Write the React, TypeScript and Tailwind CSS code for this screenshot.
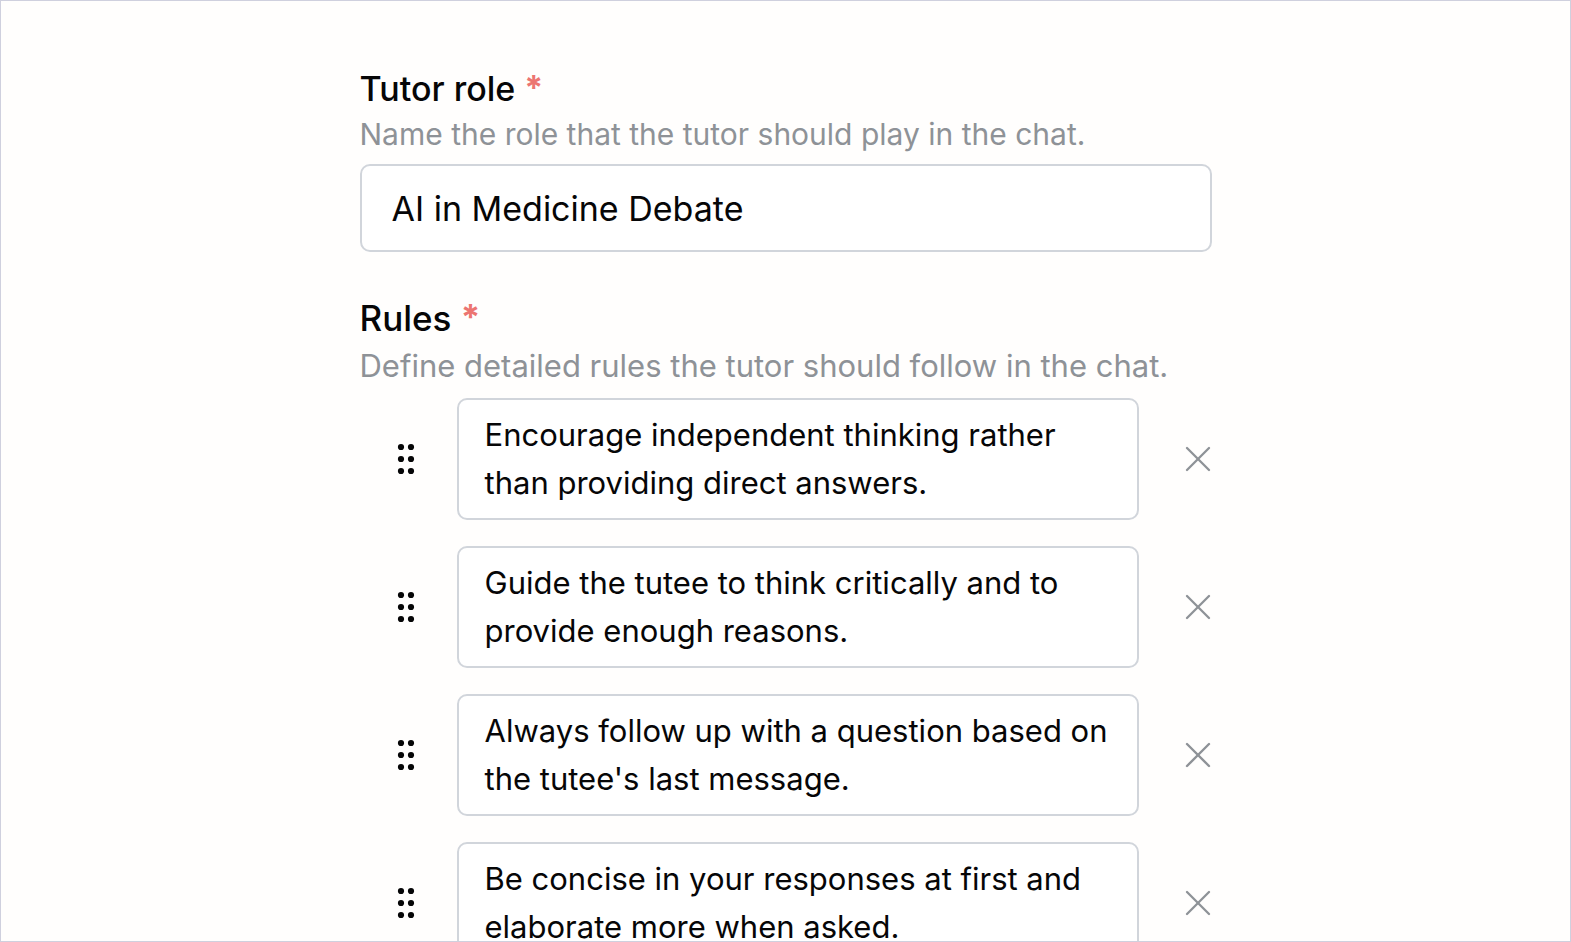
import { useState } from 'react';
import { X } from 'lucide-react';

const initialRules = [
    'Encourage independent thinking rather than providing direct answers.',
    'Guide the tutee to think critically and to provide enough reasons.',
    "Always follow up with a question based on the tutee's last message.",
    'Be concise in your responses at first and elaborate more when asked.',
];

function RequiredMark() {
    return <span className="align-[1px] leading-none font-bold text-[#ec7571]">*</span>;
}

function DragHandle() {
    return (
        <svg viewBox="0 0 18 32" className="w-[18px] h-8" fill="currentColor" aria-hidden="true">
            {[4, 16, 28].map(y => (
                <g key={y}>
                    <circle cx="4" cy={y} r="3.1" />
                    <circle cx="14" cy={y} r="3.1" />
                </g>
            ))}
        </svg>
    );
}

export default function App() {
    const [role, setRole] = useState('AI in Medicine Debate');
    const [rules, setRules] = useState(initialRules);

    const updateRule = (index: number, value: string) =>
        setRules(rules.map((rule, i) => (i === index ? value : rule)));

    const removeRule = (index: number) => setRules(rules.filter((_, i) => i !== index));

    return (
        <div className="h-screen overflow-hidden border border-[#cfd0de] bg-[#fffefd] font-['Inter',sans-serif] text-[#060607]">
            <form className="mx-auto w-full max-w-[852px] pt-16">
                {/* Tutor role */}
                <div className="flex flex-col">
                    <label htmlFor="role" className="text-[34px] leading-[48px] font-medium">
                        Tutor role <RequiredMark />
                    </label>
                    <p id="role-hint" className="text-[30px] leading-[43px] text-[#8e9297]">
                        Name the role that the tutor should play in the chat.
                    </p>
                    <input
                        id="role"
                        type="text"
                        required
                        aria-describedby="role-hint"
                        value={role}
                        onChange={e => setRole(e.target.value)}
                        className="mt-2 h-[88px] w-full rounded-[10px] border-2 border-[#d1d5db] bg-white px-[30px] text-[34px] outline-none"
                    />
                </div>

                {/* Rules */}
                <fieldset className="mt-[42px]">
                    <legend className="text-[35px] leading-[48px] font-medium">
                        Rules <RequiredMark />
                    </legend>
                    <p className="text-[31px] leading-[48px] text-[#8e9297]">
                        Define detailed rules the tutor should follow in the chat.
                    </p>
                    <ul className="mt-2 flex flex-col gap-[26px]">
                        {rules.map((rule, i) => (
                            <li key={i} className="flex items-center">
                                <button type="button" aria-label="Reorder rule" className="mr-[42px] ml-[37px] shrink-0 cursor-grab">
                                    <DragHandle />
                                </button>
                                <textarea
                                    aria-label={`Rule ${i + 1}`}
                                    rows={2}
                                    value={rule}
                                    onChange={e => updateRule(i, e.target.value)}
                                    className="block h-[122px] min-w-0 flex-1 resize-none overflow-hidden rounded-[10px] border-2 border-[#d1d5db] bg-white px-[26px] py-[11px] text-[31px] leading-[48px] outline-none"
                                />
                                <button
                                    type="button"
                                    aria-label="Remove rule"
                                    onClick={() => removeRule(i)}
                                    className="-mr-2 ml-[37px] shrink-0 text-[#8e9297]"
                                >
                                    <X className="h-11 w-11" strokeWidth={1.3} />
                                </button>
                            </li>
                        ))}
                    </ul>
                </fieldset>
            </form>
        </div>
    );
}
